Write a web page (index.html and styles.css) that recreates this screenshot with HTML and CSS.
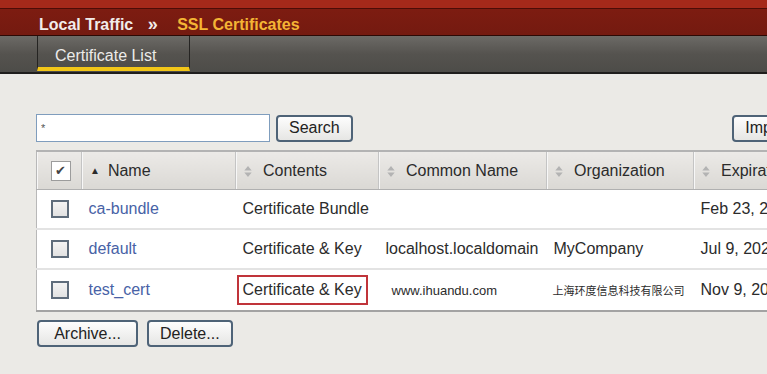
FILE: index.html
```html
<!DOCTYPE html>
<html lang="en">
<head>
  <meta charset="UTF-8">
  <meta name="viewport" content="width=device-width, initial-scale=1.0">
  <title>Local Traffic - SSL Certificates</title>
  <link rel="stylesheet" href="styles.css">
</head>
<body>
  <div class="topbar"></div>
  <div class="breadcrumb">
    <span class="crumb">Local Traffic</span>
    <span class="sep">&raquo;</span>
    <span class="crumb current">SSL Certificates</span>
  </div>
  <div class="tabbar">
    <div class="tab active">Certificate List</div>
  </div>

  <div class="content">
    <div class="toolbar">
      <div class="search">
        <input class="search-input" type="text" value="*">
        <button class="btn">Search</button>
      </div>
      <button class="btn">Import...</button>
    </div>

    <table class="list">
      <colgroup>
        <col class="c-check">
        <col class="c-name">
        <col class="c-contents">
        <col class="c-common">
        <col class="c-org">
        <col class="c-exp">
      </colgroup>
      <thead>
        <tr>
          <th class="check-cell"><span class="checkbox checked">&#10004;</span></th>
          <th><span class="sort-asc">&#9650;</span>Name</th>
          <th><svg class="sort" viewBox="0 0 8 12"><path d="M4 0L8 5H0z M4 12L0 7h8z"/></svg>Contents</th>
          <th><svg class="sort" viewBox="0 0 8 12"><path d="M4 0L8 5H0z M4 12L0 7h8z"/></svg>Common Name</th>
          <th><svg class="sort" viewBox="0 0 8 12"><path d="M4 0L8 5H0z M4 12L0 7h8z"/></svg>Organization</th>
          <th><svg class="sort" viewBox="0 0 8 12"><path d="M4 0L8 5H0z M4 12L0 7h8z"/></svg>Expiration Date</th>
        </tr>
      </thead>
      <tbody>
        <tr>
          <td class="check-cell"><span class="checkbox"></span></td>
          <td><a href="#">ca-bundle</a></td>
          <td>Certificate Bundle</td>
          <td></td>
          <td></td>
          <td>Feb 23, 2017</td>
        </tr>
        <tr>
          <td class="check-cell"><span class="checkbox"></span></td>
          <td><a href="#">default</a></td>
          <td>Certificate &amp; Key</td>
          <td>localhost.localdomain</td>
          <td>MyCompany</td>
          <td>Jul 9, 2023</td>
        </tr>
        <tr>
          <td class="check-cell"><span class="checkbox"></span></td>
          <td><a href="#">test_cert</a></td>
          <td><span class="marked">Certificate &amp; Key</span></td>
          <td class="small">www.ihuandu.com</td>
          <td class="cjk">上海环度信息科技有限公司</td>
          <td>Nov 9, 2014</td>
        </tr>
      </tbody>
    </table>

    <div class="actions">
      <button class="btn wide">Archive...</button>
      <button class="btn">Delete...</button>
    </div>
  </div>
</body>
</html>
```

FILE: styles.css
```css
body {
  margin: 0;
  overflow: hidden;
  font-family: "Liberation Sans", Arial, sans-serif;
  font-size: 16px;
  color: #2b2b2b;
  background-color: #ebeae6;
}
.topbar {
  height: 8px;
  background-color: #a5291a;
  border-bottom: 1px solid #4c0c07;
}
.breadcrumb {
  height: 27px;
  box-sizing: border-box;
  padding: 4px 0 0 39px;
  line-height: 22px;
  background: linear-gradient(#7d1c11, #741a10);
  border-bottom: 1px solid #2c0905;
  font-weight: bold;
  color: #f1ecea;
}
.breadcrumb .sep {
  margin: 0 15px 0 10px;
  font-size: 18px;
}
.breadcrumb .current {
  color: #f4b535;
}
.tabbar {
  height: 36px;
  background: linear-gradient(#6c6a66, #55534f 50%, #4d4c48);
  border-bottom: 2px solid #1f1e1c;
}
.tab {
  margin-left: 37px;
  width: 153px;
  height: 35px;
  padding: 12px 0 0 17px;
  line-height: 16px;
  box-sizing: border-box;
  border-left: 1px solid #252422;
  border-right: 1px solid #252422;
  border-bottom: 4px solid #f2c618;
  color: #ecebe9;
}
.content {
  padding: 40px 0 0 36px;
  width: 781px;
}
.toolbar {
  display: flex;
  justify-content: space-between;
  align-items: center;
  height: 28px;
  margin-bottom: 8px;
}
.search {
  display: flex;
  align-items: center;
  gap: 6px;
}
.search-input {
  width: 234px;
  height: 28px;
  box-sizing: border-box;
  border: 1px solid #7f9dbd;
  padding: 0 4px;
  font-family: inherit;
  font-size: 11px;
  color: #555;
  background: #fff;
}
.btn {
  height: 27px;
  padding: 0 11px;
  font-family: inherit;
  font-size: 16px;
  color: #222;
  background: linear-gradient(#fdfdfd, #e6e6e4);
  border: 2px solid #4e6377;
  border-radius: 4px;
}
.list {
  width: 781px;
  table-layout: fixed;
  border-collapse: collapse;
  background: #fff;
  border-left: 1px solid #b8b8b8;
  border-bottom: 2px solid #a3a3a3;
}
.c-check { width: 45px; }
.c-name { width: 154px; }
.c-contents { width: 143px; }
.c-common { width: 168px; }
.c-org { width: 147px; }
.c-exp { width: 124px; }
.list th {
  height: 37px;
  padding: 0 0 0 8px;
  text-align: left;
  font-weight: normal;
  white-space: nowrap;
  overflow: hidden;
  background: linear-gradient(#eceae7, #dad8d4);
  border-top: 2px solid #b3b3b3;
  border-bottom: 1px solid #b0b0b0;
  border-right: 1px solid #c4c4c4;
  box-shadow: inset 1px 0 0 #f7f7f7;
}
.list td {
  height: 38px;
  padding: 0 0 0 7px;
  white-space: nowrap;
  overflow: hidden;
  border-bottom: 2px solid #e3e3e3;
}
.list tbody tr:last-child td {
  border-bottom: none;
  height: 40px;
}
.list .check-cell {
  padding: 0;
  text-align: center;
}
.sort-asc {
  font-size: 10px;
  margin-right: 8px;
  vertical-align: 2px;
}
.sort {
  width: 8px;
  height: 11px;
  margin-right: 11px;
  vertical-align: -1px;
  fill: #b3b3b3;
}
.checkbox {
  display: inline-block;
  width: 14px;
  height: 14px;
  border: 2px solid #5e6c7b;
  background: linear-gradient(#f3f3f3, #e2e2e2);
  vertical-align: middle;
  margin-left: 2px;
}
.checkbox.checked {
  width: 18px;
  height: 18px;
  border: 1px solid #9c9c9c;
  background: #fff;
  font-size: 13px;
  line-height: 18px;
  color: #444;
  margin-left: 3px;
}
.list a {
  color: #4862a6;
  text-decoration: none;
}
.marked {
  display: inline-block;
  margin-left: -6px;
  padding: 4px 4px;
  border: 2px solid #c0343a;
}
.list td.small {
  font-size: 13px;
  padding-left: 13px;
}
.list td.cjk {
  font-family: "Noto Sans CJK SC", sans-serif;
  font-size: 11px;
  padding-left: 6px;
}
.actions {
  display: flex;
  gap: 9px;
  margin-top: 8px;
  padding-left: 1px;
}
.btn.wide {
  width: 101px;
}
```
